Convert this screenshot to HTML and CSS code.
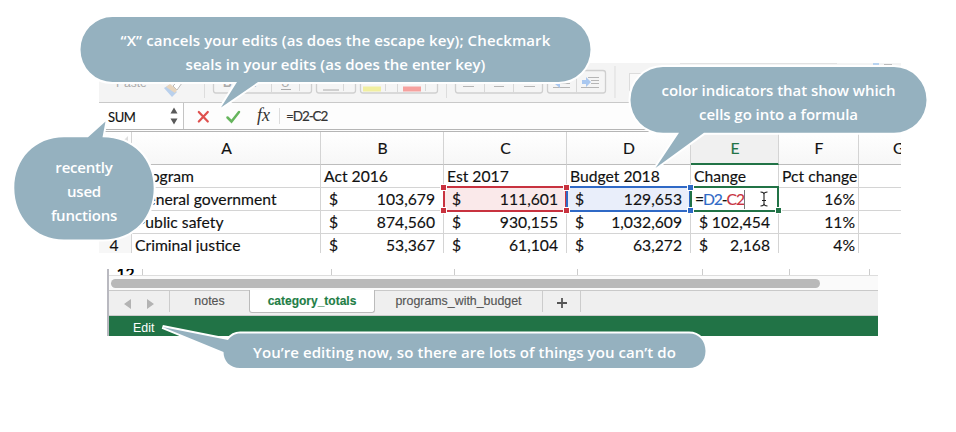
FILE: index.html
```html
<!DOCTYPE html>
<html lang="en">
<head>
<meta charset="utf-8">
<title>Formula editing</title>
<link rel="stylesheet" href="styles.css">
</head>
<body>
<main class="figure">
  <section class="sheet">
    <div class="ribbon">
      <svg width="802" height="39" viewBox="99 63 802 39">
        <g class="faint-text"><text x="116" y="87">Paste</text></g>
        <path d="M173 86l6-6 3 3-5 7z" fill="#fff" stroke="#bbb"/><path d="M164 88l5-3 8 7-5 5z" fill="#b9d0ec"/><path d="M166 87l4-3 7 6-2 3z" fill="#e8d5bd"/>
        <g fill="#f5f5f5" stroke="#cfcfcf" stroke-width="1.3">
          <rect x="213.500" y="70" width="98" height="23" rx="2.500"/><rect x="316.500" y="70" width="39" height="23" rx="2.500"/><rect x="360.500" y="70" width="77" height="23" rx="2.500"/><rect x="455.500" y="70" width="87" height="23" rx="2.500"/><rect x="547.500" y="70.500" width="58" height="22.500" rx="2.500"/>
        </g>
        <g class="faint-text"><text x="223" y="87" font-weight="bold">B</text><text x="254" y="87" font-style="italic">I</text><text x="281" y="87">U</text></g>
        <path d="M281 89.500h10M323 90h16" stroke="#aaa"/>
        <path d="M204.500 66v32M446.500 66v32M615 66v32" stroke="#ddd"/>
        <path d="M271.500 70v22M299.500 82v9M343.500 82v9M385.500 82v9M397.500 70v23M425.500 82v9M484.500 70v23M513.500 70v23M576.500 71v22" stroke="#d8d8d8"/>
        <path d="M363 86.500h18v5h-18z" fill="#f1efa0"/><path d="M403 86.500h18v5h-18z" fill="#f6a19e"/>
        <path d="M462 82.500h13M463 86.500h11M491 82.500h14M494 86.500h10M522 82.500h13M524 86.500h11M559 79.500h11M559 83.500h11M553 87.500h17M588 77.500h11M591 80.500h8M591 83.500h8M581 87.500h18" stroke="#b6b6b6"/>
        <path d="M555 84l5-4v8zM582 80h4v-3l5 5-5 5v-3h-4z" fill="#aac8f0"/>
        <rect x="629.500" y="73.500" width="25" height="17" fill="#fafafa" stroke="#dcdcdc"/>
        <path d="M680 63.500h157" stroke="#e2e2e2"/><path d="M873 64h6" stroke="#b9d4f1" stroke-width="2"/><path d="M884 64.500h8" stroke="#bbb"/>
      </svg>
    </div>
    <div class="formula-bar">
      <div class="name-box"><span>SUM</span>
        <svg width="8" height="18" viewBox="0 0 8 18"><path d="M4 .5l3.500 6H.5zM4 17.500l3.500-6H.5z" fill="#595959"/></svg>
      </div>
      <svg class="actions" width="90" height="26" viewBox="184 103 90 26"><path d="M198.800 112l9 9.500M207.800 112l-9 9.500" stroke="#df504e" stroke-width="2.200" stroke-linecap="round"/><path d="M227.500 117.500l4 4 7.500-9.500" fill="none" stroke="#66b55d" stroke-width="2.500" stroke-linecap="round"/><text x="257" y="121" class="fx">fx</text></svg>
      <span class="formula">=D2-C2</span>
    </div>
    <div class="grid">
      <div class="head corner"><svg width="12" height="12"><path d="M11 0v11H0z" fill="#ddd"/></svg></div><div class="head">A</div><div class="head">B</div><div class="head">C</div><div class="head">D</div><div class="head active">E</div><div class="head">F</div><div class="head g">G</div>
      <div class="num">1</div><div class="name">Program</div><div>Act 2016</div><div>Est 2017</div><div>Budget 2018</div><div>Change</div><div class="tight">Pct change</div><div></div>
      <div class="num">2</div><div class="name">General government</div><div class="money"><i>$</i>103,679</div><div class="money ref-red"><i>$</i>111,601<b class="tl"></b><b class="tr"></b><b class="bl"></b><b class="br"></b></div><div class="money ref-blue"><i>$</i>129,653<b class="tr"></b><b class="br"></b></div><div class="editing">=<span class="blue">D2</span>-<span class="red">C2</span><span class="caret"></span><svg width="10" height="16" viewBox="0 0 10 16"><path d="M1.500 1C4 1 5 2 5 3.500v9C5 14 4 15 1.500 15M8.500 1C6 1 5 2 5 3.500M5 12.500C5 14 6 15 8.500 15M3 9.500h4" fill="none" stroke="#222" stroke-width="1.100"/></svg><b class="br"></b></div><div class="pct">16%</div><div></div>
      <div class="num">3</div><div class="name">Public safety</div><div class="money"><i>$</i>874,560</div><div class="money"><i>$</i>930,155</div><div class="money"><i>$</i>1,032,609</div><div class="money"><i>$</i>102,454</div><div class="pct">11%</div><div></div>
      <div class="num">4</div><div>Criminal justice</div><div class="money"><i>$</i>53,367</div><div class="money"><i>$</i>61,104</div><div class="money"><i>$</i>63,272</div><div class="money"><i>$</i>2,168</div><div class="pct">4%</div><div></div>
    </div>
  </section>
  <section class="footer">
    <div class="last-row"><span>12</span><span></span><span></span><span></span><span></span><span></span><span></span><span></span></div>
    <div class="scroll"><div class="thumb"></div></div>
    <div class="tabs">
      <div class="arrows"><svg width="34" height="12"><path d="M8 1v10L1 6zM24 1v10l7-5z" fill="#b3b3b3"/></svg></div>
      <div class="tab">notes</div><div class="tab selected">category_totals</div><div class="tab wide">programs_with_budget</div>
      <div class="plus"><svg width="12" height="12"><path d="M6 1v10M1 6h10" stroke="#555" stroke-width="1.800"/></svg></div>
    </div>
    <div class="status">Edit</div>
  </section>

  <svg class="bubbles" width="956" height="432" viewBox="0 0 956 432">
    <path d="M112.500 17H558.500A32 32.500 0 0 1 558.500 82H258L221 107.500 237 82H112.500A32 32.500 0 0 1 112.500 17z"/>
    <path d="M663 67H894A32.500 32.900 0 0 1 894 132.800H704L655.500 168 679 132.800H663A32.500 32.900 0 0 1 663 67z"/>
    <path d="M64 137.200H88L105.500 121.500 102.500 137.200C133 137.200 153.700 159 153.700 188S134 239.500 103 239.500H64C35 239.500 14.300 217 14.300 188S35 137.200 64 137.200z"/>
    <path d="M240 333.500H689C699 333.500 705.500 341 705.500 351S699 368 689 368H240C230 368 223.500 361 223.500 352L162.500 327 228 340C231 336 235 333.500 240 333.500z"/>
  </svg>
  <p class="note n1"><span class="l1">“X” cancels your edits (as does the escape key); Checkmark</span><br><span class="l2">seals in your edits (as does the enter key)</span></p>
  <p class="note n2">color indicators that show which<br>cells go into a formula</p>
  <p class="note n3">recently<br>used<br>functions</p>
  <p class="note n4">You’re editing now, so there are lots of things you can’t do</p>
</main>
</body>
</html>
```
FILE: styles.css
```css
* { box-sizing: border-box; }
body { margin: 0; background: #fff; }
.figure { position: relative; width: 956px; height: 432px; padding-top: 63px; overflow: hidden; }
svg { display: block; }

.sheet { width: 802px; height: 190px; margin-left: 99px; overflow: hidden; font-family: Lato, sans-serif; color: #111; -webkit-text-stroke: .15px; }
.ribbon { height: 40px; background: #f4f4f4; border-bottom: 1px solid #c9c9c9; }
.faint-text { font: 12px "Liberation Sans", sans-serif; fill: #aaa; }
.formula-bar { display: flex; align-items: center; height: 29px; background: #fdfdfd; border-bottom: 3px double #b5b5b5; font-size: 13px; }
.name-box { display: flex; align-items: center; justify-content: space-between; width: 85px; height: 26px; padding: 0 5px 0 9px; border-right: 1px solid #c4c4c4; background: #fff; }
.name-box span { padding-top: 2px; letter-spacing: -.4px; }
.fx { font: italic 18px "Liberation Serif", serif; fill: #333; }
.formula { margin-left: 5px; padding-left: 6px; border-left: 1px solid #ddd; color: #333; letter-spacing: -1.1px; font-size: 13.5px; }

.grid { display: grid; grid-template-columns: 33px 189px 123px 123px 124px 88px 80px 42px; grid-template-rows: 33px 23px 23px 23px 23px; font-size: 15.7px; }
.grid > div { position: relative; padding: 0 0 0 3px; line-height: 23px; white-space: nowrap; border-right: 1px solid #d4d4d4; border-bottom: 1px solid #d4d4d4; }
.grid > div:nth-child(8n) { border-right: 0; }
.grid > .head { padding: 0 0 0 1px; text-align: center; line-height: 33px; background: linear-gradient(#fff, #f7f7f7); border-bottom-color: #bdbdbd; }
.grid > .active { background: #f0f0f0; color: #217346; border-bottom: 2px solid #217346; }
.grid > .g { text-align: left; padding-left: 34px; }
.corner svg { position: absolute; right: 2px; top: 4px; }
.grid > .num { padding: 0 2px 0 0; text-align: center; background: #f7f7f7; }
.grid > .name { padding-left: 4px; }
.grid > .money { display: flex; justify-content: space-between; padding: 0 8px; }
.money i { font-style: normal; }
.grid > .pct { padding-right: 3px; text-align: right; }
.grid > .tight { letter-spacing: 0; }
.grid > .ref-red { background: #fae9ea; }
.grid > .ref-blue { background: #e9eefa; }
.ref-red::before, .ref-blue::before, .editing::before { content: ""; position: absolute; inset: -2px -1px -2px -1px; border: 2px solid #c8323f; }
.ref-blue::before { border-color: #2f69c6; }
.editing::before { border-color: #217346; }
.grid b { position: absolute; z-index: 2; width: 5px; height: 5px; background: #c8323f; box-shadow: 0 0 0 1px #fff; }
.ref-blue b { background: #2f69c6; }
.editing b { background: #217346; }
.tl, .tr { top: -3px; }
.bl, .br { bottom: -3px; }
.tl, .bl { left: -3px; }
.tr, .br { right: -3px; }
.grid > .editing { display: flex; align-items: center; padding-left: 4px; letter-spacing: -1.1px; background: #fff; }
.blue { color: #2f69c6; }
.red { color: #c8323f; }
.caret { width: 1px; height: 19px; background: #777; }
.editing svg { margin-left: 14px; }

.footer { width: 771px; height: 67px; margin: 16px 0 0 107px; border-left: 2px solid #b9b9c0; font-family: "Liberation Sans", sans-serif; }
.last-row { display: grid; grid-template-columns: 34px 189px 123px 123px 125px 87px 80px 8px; height: 7px; overflow: hidden; border-bottom: 1px solid #ddd; }
.last-row span { height: 7px; border-right: 1px solid #ccc; font: bold 15.7px/8px Lato, sans-serif; text-align: center; }
.last-row span:last-child { border: 0; }
.scroll { height: 15px; padding: 3px 0 0 2px; background: #fafafa; border-bottom: 1px solid #c9c9c9; }
.thumb { width: 709px; height: 9px; border-radius: 5px; background: #b9b9b9; }
.tabs { display: flex; height: 25px; background: #efefef; border-bottom: 1px solid #ccc; color: #555; font-size: 12.400px; line-height: 21px; text-align: center; -webkit-text-stroke: .15px; }
.arrows { width: 61px; height: 21px; padding: 7px 0 0 14px; border-right: 1px solid #ccc; }
.tab { width: 79px; }
.tab.selected { width: 126px; height: 23px; margin-top: -1px; line-height: 22px; background: #fff; border: 1px solid #bbb; border-top: 0; border-radius: 0 0 3px 3px; color: #1f7e46; font-weight: bold; font-size: 12px; }
.tab.wide { width: 168px; border-right: 1px solid #ccc; height: 21px; }
.plus { width: 38px; height: 21px; padding: 6px 0 0 13px; border-right: 1px solid #ccc; }
.status { height: 20px; padding-left: 24px; background: #217346; color: #fff; font-size: 12.400px; line-height: 24px; }

.bubbles { position: absolute; inset: 0; fill: #95b1bf; stroke: #fff; stroke-width: 4px; paint-order: stroke; }
.note { position: absolute; margin: 0; color: #fff; font: 600 15px/24px "Open Sans", sans-serif; text-align: center; white-space: nowrap; }
.n1 { left: 80px; top: 28px; width: 511px; }
.l1 { letter-spacing: .11px; }
.l2 { letter-spacing: .04px; }
.n2 { left: 630px; top: 78px; width: 297px; letter-spacing: -.05px; }
.n3 { left: 14px; top: 155px; width: 140px; letter-spacing: -.2px; }
.n4 { left: 223px; top: 340px; width: 483px; letter-spacing: .07px; }
```
